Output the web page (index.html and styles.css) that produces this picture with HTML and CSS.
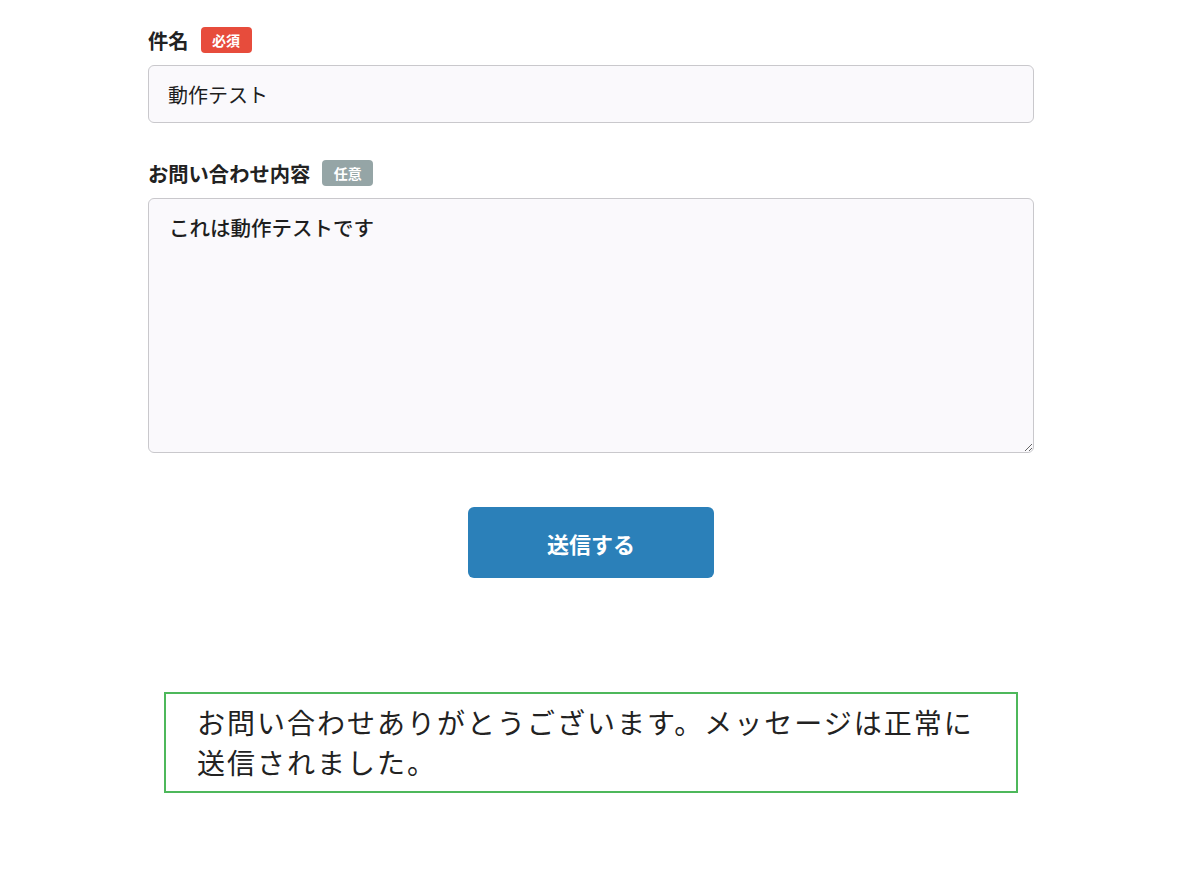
FILE: index.html
```html
<!DOCTYPE html>
<html lang="ja">
<head>
<meta charset="utf-8">
<title>お問い合わせ</title>
<link rel="stylesheet" href="styles.css">
</head>
<body>
<div class="page">
  <form class="form">
    <div class="field">
      <div class="label-row">
        <label class="label" for="subject">件名</label>
        <span class="badge badge-required">必須</span>
      </div>
      <input class="input" id="subject" type="text" value="動作テスト">
    </div>
    <div class="field field-message">
      <div class="label-row">
        <label class="label" for="message">お問い合わせ内容</label>
        <span class="badge badge-optional">任意</span>
      </div>
      <textarea class="textarea" id="message">これは動作テストです</textarea>
    </div>
    <div class="actions">
      <button class="submit" type="button">送信する</button>
    </div>
  </form>
  <div class="notice">お問い合わせありがとうございます。メッセージは正常に送信されました。</div>
</div>
</body>
</html>
```

FILE: styles.css
```css
html, body {
  margin: 0;
  padding: 0;
  background: #ffffff;
}

body {
  font-family: "Noto Sans CJK JP", "Noto Sans", sans-serif;
  color: #222222;
}

.page {
  width: 886px;
  margin-left: 148px;
  padding-top: 27px;
}

.form {
  display: flex;
  flex-direction: column;
}

.field {
  display: flex;
  flex-direction: column;
  gap: 12px;
}

.field-message {
  margin-top: 37px;
}

.label-row {
  display: flex;
  align-items: center;
  gap: 12px;
  height: 26px;
}

.label {
  font-size: 20.3px;
  font-weight: 700;
  color: #222222;
  line-height: 26px;
}

.badge {
  display: inline-flex;
  align-items: center;
  justify-content: center;
  height: 26px;
  padding: 0 11.5px;
  border-radius: 4px;
  color: #ffffff;
  font-size: 14px;
  font-weight: 700;
  box-sizing: border-box;
}

.badge-required {
  background: #e74c3c;
}

.badge-optional {
  background: #95a5a6;
}

.input,
.textarea {
  display: block;
  width: 100%;
  box-sizing: border-box;
  border: 1px solid #c9c8cc;
  border-radius: 6px;
  background: #faf9fc;
  font-family: "Noto Sans CJK JP", "Noto Sans", sans-serif;
  font-size: 20px;
  color: #1e1e1e;
  margin: 0;
}

.input {
  height: 58px;
  padding: 0 19px;
  font-weight: 400;
}

.textarea {
  height: 255px;
  padding: 13px 20px;
  font-weight: 500;
  font-size: 20.5px;
  line-height: 30px;
  resize: vertical;
}

.actions {
  display: flex;
  justify-content: center;
  margin-top: 54px;
}

.submit {
  width: 246px;
  height: 71px;
  border: none;
  border-radius: 6px;
  background: #2b80b9;
  color: #ffffff;
  font-family: "Noto Sans CJK JP", "Noto Sans", sans-serif;
  font-size: 22px;
  font-weight: 700;
  cursor: pointer;
}

.notice {
  margin: 114px 16px 0;
  border: 2px solid #4db85b;
  padding: 8px 31px 9px;
  font-size: 28px;
  letter-spacing: 2px;
  line-height: 40px;
  color: #222222;
}
```
